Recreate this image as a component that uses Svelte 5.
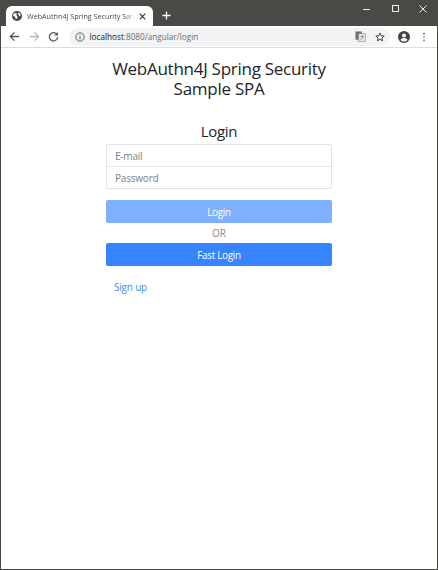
<script>
  let email = "";
  let password = "";
</script>

<div class="window">
  <div class="titlebar">
    <div class="tab">
      <svg class="favicon" viewBox="0 0 16 16" width="10" height="10">
        <circle cx="8" cy="8" r="8" fill="#45494d" />
        <path d="M2 5l3-2 3 1-1 3 2 2-1 3-2 1-1-4-3-1zM10 2l3 2 1 3-2 1-2-2z" fill="#fff" />
      </svg>
      <span class="tab-title">WebAuthn4J Spring Security Sample SPA</span>
      <svg class="tab-close" viewBox="0 0 10 10" width="7" height="7">
        <path d="M1 1l8 8M9 1l-8 8" stroke="#333" stroke-width="1.6" fill="none" />
      </svg>
    </div>
    <svg class="new-tab" viewBox="0 0 10 10" width="9" height="9">
      <path d="M5 .5v9M.5 5h9" stroke="#fff" stroke-width="1.4" fill="none" />
    </svg>
    <div class="window-controls">
      <svg viewBox="0 0 10 10" width="10" height="10"><path d="M1 5.5h7" stroke="#eee" stroke-width="1" fill="none" /></svg>
      <svg viewBox="0 0 10 10" width="10" height="10"><rect x="2.5" y="1.5" width="6" height="6" stroke="#eee" stroke-width="1" fill="none" /></svg>
      <svg viewBox="0 0 10 10" width="10" height="10"><path d="M1.5 1.5l7 7M8.5 1.5l-7 7" stroke="#eee" stroke-width="1" fill="none" /></svg>
    </div>
  </div>

  <div class="toolbar">
    <svg viewBox="0 0 12 12" width="11" height="11">
      <path d="M11 6H2M6 1.5L1.5 6 6 10.5" stroke="#555" stroke-width="1.4" fill="none" />
    </svg>
    <svg viewBox="0 0 12 12" width="11" height="11">
      <path d="M1 6h9M6 1.5L10.5 6 6 10.5" stroke="#b5b5b5" stroke-width="1.4" fill="none" />
    </svg>
    <svg viewBox="0 0 12 12" width="11" height="11">
      <path d="M10 4.2A4.5 4.5 0 1 0 10.5 6.5" stroke="#555" stroke-width="1.4" fill="none" />
      <path d="M10.8 1v4h-4z" fill="#555" />
    </svg>
    <div class="omnibox">
      <svg viewBox="0 0 12 12" width="10" height="10">
        <circle cx="6" cy="6" r="5" stroke="#555" stroke-width="1.1" fill="none" />
        <path d="M6 5.2v3.6M6 3v1.2" stroke="#555" stroke-width="1.2" />
      </svg>
      <span class="url"><b>localhost</b>:8080/angular/login</span>
      <svg class="translate" viewBox="0 0 12 12" width="11" height="11">
        <rect x="0.5" y="0.5" width="7" height="9" fill="#707070" />
        <rect x="4" y="3" width="7.5" height="8.5" fill="#e2e4e6" stroke="#888" stroke-width=".6" />
        <path d="M6 6h4M8 5v1M6.5 9.5L9 6.5" stroke="#666" stroke-width=".7" fill="none" />
      </svg>
      <svg viewBox="0 0 12 12" width="10" height="10">
        <path d="M6 1.2l1.4 3.3 3.6.3-2.7 2.3.8 3.5L6 8.8l-3.1 1.8.8-3.5L1 4.8l3.6-.3z" stroke="#444" stroke-width="1.2" fill="none" />
      </svg>
    </div>
    <svg class="avatar" viewBox="0 0 12 12" width="12" height="12">
      <circle cx="6" cy="6" r="6" fill="#444" />
      <circle cx="6" cy="4.5" r="2" fill="#f1f3f4" />
      <path d="M2.4 9c.8-1.4 2.2-2 3.6-2s2.8.6 3.6 2A4.6 4.6 0 0 1 6 10.6 4.6 4.6 0 0 1 2.4 9z" fill="#f1f3f4" />
    </svg>
    <svg viewBox="0 0 4 12" width="4" height="10">
      <circle cx="2" cy="2" r="1" fill="#555" />
      <circle cx="2" cy="6" r="1" fill="#555" />
      <circle cx="2" cy="10" r="1" fill="#555" />
    </svg>
  </div>

  <main class="page">
    <h1>WebAuthn4J Spring Security<br />Sample SPA</h1>
    <form class="login" on:submit|preventDefault>
      <h2>Login</h2>
      <div class="fields">
        <input type="text" placeholder="E-mail" bind:value={email} />
        <input type="password" placeholder="Password" bind:value={password} />
      </div>
      <button class="btn disabled" type="submit">Login</button>
      <div class="or">OR</div>
      <button class="btn" type="button">Fast Login</button>
      <a class="signup" href="#signup">Sign up</a>
    </form>
  </main>
</div>

<style>
  :global(body) {
    background: #fff;
  }

  .window {
    box-sizing: border-box;
    width: 438px;
    height: 570px;
    border: 1px solid #4b4a47;
    border-top: 0;
    display: flex;
    flex-direction: column;
    font-family: "Open Sans", "Noto Sans", sans-serif;
    overflow: hidden;
  }

  .titlebar {
    height: 26px;
    flex: none;
    background: #4a4945;
    display: flex;
    align-items: flex-end;
    padding-left: 5px;
  }

  .tab {
    box-sizing: border-box;
    width: 147px;
    height: 20px;
    background: #fff;
    border-radius: 6px 6px 0 0;
    display: flex;
    align-items: center;
    padding: 0 7px 0 6px;
    gap: 5px;
  }

  .tab-title {
    flex: 1;
    min-width: 0;
    font-size: 7.2px;
    color: #45494d;
    white-space: nowrap;
    overflow: hidden;
    -webkit-mask-image: linear-gradient(to right, #000 92%, transparent);
    mask-image: linear-gradient(to right, #000 92%, transparent);
  }

  .new-tab {
    margin: 0 0 6px 9px;
  }

  .window-controls {
    margin-left: auto;
    align-self: flex-start;
    display: flex;
    gap: 18px;
    padding: 4px 9px 0 0;
  }

  .toolbar {
    height: 21px;
    flex: none;
    background: #fff;
    border-bottom: 1px solid #dadce0;
    display: flex;
    align-items: center;
    padding: 0 11px 0 8px;
    gap: 8.5px;
  }

  .omnibox {
    flex: 1;
    height: 18px;
    background: #f1f3f4;
    border-radius: 9px;
    display: flex;
    align-items: center;
    padding: 0 5px 0 6px;
    gap: 5px;
    margin-left: 1px;
  }

  .omnibox .translate {
    margin-right: 4px;
  }

  .avatar {
    margin-right: 3.5px;
  }

  .url {
    flex: 1;
    font-size: 8.2px;
    color: #6b6f73;
    white-space: nowrap;
  }

  .url b {
    font-weight: 400;
    color: #202124;
  }

  .page {
    flex: 1;
    display: flex;
    flex-direction: column;
    align-items: center;
    color: #212529;
  }

  h1 {
    margin: 11px 0 0;
    font-size: 17px;
    line-height: 20px;
    letter-spacing: -0.27px;
    font-weight: 400;
    text-align: center;
  }

  .login {
    width: 226px;
    display: flex;
    flex-direction: column;
    margin-top: 22px;
  }

  h2 {
    margin: 0 0 3px;
    font-size: 15px;
    line-height: 20px;
    letter-spacing: -0.3px;
    font-weight: 400;
    text-align: center;
  }

  .fields {
    display: flex;
    flex-direction: column;
    margin-bottom: 11px;
  }

  input {
    box-sizing: border-box;
    height: 23px;
    width: 100%;
    padding: 0 8px;
    border: 1px solid #dfe3e8;
    font-family: inherit;
    font-size: 10px;
    letter-spacing: -0.2px;
    color: #495057;
    background: #fff;
    outline: none;
  }

  input:first-child {
    border-radius: 2px 2px 0 0;
  }

  input:last-child {
    margin-top: -1px;
    border-radius: 0 0 2px 2px;
  }

  input::placeholder {
    color: #7a8188;
    opacity: 1;
  }

  .btn {
    height: 23px;
    border: 0;
    border-radius: 2px;
    background: #3684ff;
    color: #fff;
    font-family: inherit;
    font-size: 10px;
    letter-spacing: -0.35px;
    padding: 0;
  }

  .btn.disabled {
    background: #7fb0ff;
  }

  .or {
    height: 20px;
    line-height: 20px;
    text-align: center;
    font-size: 10px;
    color: #8a8a8a;
  }

  .signup {
    margin: 14px 0 0 8px;
    font-size: 10px;
    letter-spacing: -0.2px;
    line-height: 14px;
    color: #3c8dff;
    text-decoration: none;
  }
</style>
